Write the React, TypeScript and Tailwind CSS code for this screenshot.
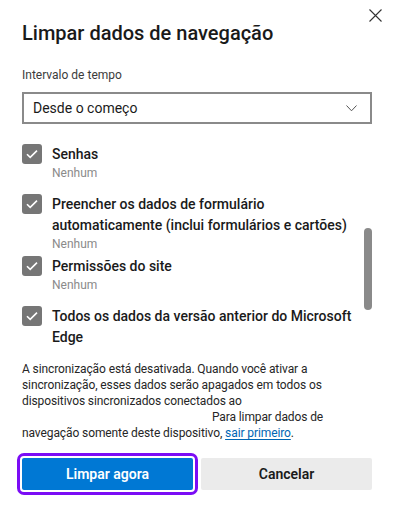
import { useState } from "react";

const ITEMS = [
  { label: "Senhas", sub: "Nenhum", mb: "mb-[13px]" },
  {
    label: "Preencher os dados de formulário automaticamente (inclui formulários e cartões)",
    sub: "Nenhum",
    mb: "mb-[4px]",
  },
  { label: "Permissões do site", sub: "Nenhum", mb: "mb-[13px]" },
  { label: "Todos os dados da versão anterior do Microsoft Edge", sub: "", mb: "" },
];

function Check() {
  return (
    <span className="flex h-5 w-5 shrink-0 items-center justify-center rounded-[3px] bg-[#767676]">
      <svg width="12" height="10" viewBox="0 0 12 10" fill="none">
        <path d="M1 5.2 4.2 8.4 11 1.6" stroke="#fff" strokeWidth="1.6" />
      </svg>
    </span>
  );
}

export default function App() {
  const [range] = useState("Desde o começo");

  return (
    <div
      className="relative h-[510px] w-[394px] overflow-hidden bg-white px-[22px] text-[#1a1a1a]"
      style={{ fontFamily: 'Roboto, "Noto Sans", sans-serif' }}
    >
      {/* Close */}
      <button className="absolute right-[12px] top-[9px] p-0">
        <svg width="13" height="13" viewBox="0 0 13 13">
          <path d="M0.5 0.5 12.5 12.5M12.5 0.5 0.5 12.5" stroke="#333" strokeWidth="1.1" />
        </svg>
      </button>

      {/* Header */}
      <h1 className="pt-[19px] text-[20px] font-medium leading-[28px]">
        Limpar dados de navegação
      </h1>

      <div className="mt-[19px] text-[12px] leading-[18px] text-[#3b3b3b]">
        Intervalo de tempo
      </div>

      <div className="mt-[8px] flex h-[32px] items-center justify-between border-2 border-[#8a8a8a] pl-[9px] pr-[13px]">
        <span className="text-[14px] leading-5">{range}</span>
        <svg width="11" height="7" viewBox="0 0 11 7" fill="none">
          <path d="M0.5 0.5 5.5 5.8 10.5 0.5" stroke="#555" strokeWidth="1" />
        </svg>
      </div>

      {/* Checkbox list */}
      <div className="mt-[20px] flex h-[206px] overflow-hidden">
        <div className="flex-1 pr-1">
          {ITEMS.map((item, i) => (
            <div key={i} className={`flex gap-[10px] ${item.mb}`}>
              <Check />
              <div className="flex flex-col">
                <span className="text-[14px] font-medium leading-[21px]">
                  {item.label}
                </span>
                {item.sub && (
                  <span className="text-[12px] leading-[16px] text-[#8a8a8a]">
                    {item.sub}
                  </span>
                )}
              </div>
            </div>
          ))}
        </div>
        <div className="w-[8px] shrink-0">
          <div className="mt-[84px] h-[82px] w-[8px] rounded-full bg-[#8a8a8a]" />
        </div>
      </div>

      {/* Sync note */}
      <p className="mt-[11px] text-[12px] leading-[16px] tracking-[-0.1px] text-[#262626]">
        A sincronização está desativada. Quando você ativar a sincronização,
        esses dados serão apagados em todos os dispositivos sincronizados
        conectados ao <span className="inline-block w-[187px]" /> Para limpar
        dados de navegação somente deste dispositivo,{" "}
        <a className="text-[#0066b4] underline underline-offset-2">sair primeiro</a>.
      </p>

      {/* Actions */}
      <div className="mt-[17px] flex gap-2">
        <button className="h-[32px] flex-1 rounded-[2px] bg-[#0078d4] text-[14px] font-semibold text-white outline-[3px] outline-offset-2 outline-[#7b0cf5] outline-solid">
          Limpar agora
        </button>
        <button className="h-[32px] flex-1 rounded-[2px] bg-[#ebebeb] text-[14px] font-semibold text-[#1a1a1a]">
          Cancelar
        </button>
      </div>
    </div>
  );
}
